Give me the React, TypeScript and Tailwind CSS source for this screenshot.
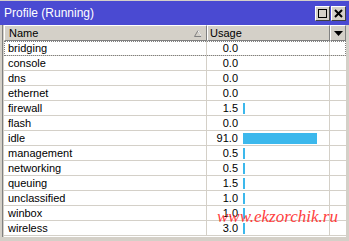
const rows: [string, number][] = [
  ["bridging", 0],
  ["console", 0],
  ["dns", 0],
  ["ethernet", 0],
  ["firewall", 1.5],
  ["flash", 0],
  ["idle", 91],
  ["management", 0.5],
  ["networking", 0.5],
  ["queuing", 1.5],
  ["unclassified", 1.0],
  ["winbox", 1.0],
  ["wireless", 3.0],
];

const App = () => {
  return (
    <div
      className="w-[349px] h-[241px] bg-[#d4d0c8] overflow-hidden relative text-[11px] text-black"
      style={{ fontFamily: '"Liberation Sans", Arial, sans-serif' }}
    >
      <div className="mt-px h-[24px] bg-[#4a4ad2] flex items-center pl-[4px] pr-[3px]">
        <span className="text-white text-[12px] flex-1">Profile (Running)</span>
        <div className="flex gap-[1px]">
          <div className="w-[15px] h-[15px] bg-[#d4d0c8] border border-t-white border-l-white border-r-[#404040] border-b-[#404040] flex items-center justify-center">
            <div className="w-[9px] h-[9px] border border-black" />
          </div>
          <div className="w-[15px] h-[15px] bg-[#d4d0c8] border border-t-white border-l-white border-r-[#404040] border-b-[#404040] flex items-center justify-center">
            <svg width="9" height="9" viewBox="0 0 9 9">
              <path d="M1 1 L8 8 M8 1 L1 8" stroke="black" strokeWidth="2" />
            </svg>
          </div>
        </div>
      </div>
      <div className="ml-[2px] mr-[3px] border-l border-[#808080] pl-px h-[212px] flex flex-col">
        <div className="flex h-[16px] bg-[#d4d0c8]">
          <div className="w-[203px] border-l border-t border-white border-r border-r-[#808080] border-b border-b-[#808080] flex items-center pl-[4px] pr-[4px]">
            <span className="flex-1">Name</span>
            <svg width="8" height="7" viewBox="0 0 8 7">
              <path d="M4 0.5 L7.5 6.5 L0.5 6.5 Z" fill="none" stroke="#808080" strokeWidth="1" />
              <path d="M4 0.5 L7.5 6.5" stroke="white" strokeWidth="1" />
            </svg>
          </div>
          <div className="w-[123px] border-l border-t border-white border-r border-r-[#808080] border-b border-b-[#808080] flex items-center pl-[2px]">
            Usage
          </div>
          <div className="flex-1 border-l border-t border-white border-r border-r-[#808080] border-b border-b-[#808080] flex items-center justify-center">
            <svg width="9" height="5" viewBox="0 0 9 5">
              <path d="M0 0 L9 0 L4.5 5 Z" fill="black" />
            </svg>
          </div>
        </div>
        <div className="flex-1 bg-white flex flex-col">
          {rows.map(([name, usage], i) => (
            <div
              key={name}
              className={`flex h-[15px] border-b border-[#d4d0c8] ${i === 0 ? "outline outline-1 outline-dotted outline-[#808080] -outline-offset-1" : ""}`}
            >
              <div className="w-[203px] border-r border-[#d4d0c8] pl-[4px] leading-[14px]">{name}</div>
              <div className="w-[123px] border-r border-[#d4d0c8] flex items-center">
                <div className="w-[31px] text-right leading-[14px]">{usage.toFixed(1)}</div>
                {usage > 0 && (
                  <div
                    className="ml-[5px] h-[11px] bg-[#3cb8ec]"
                    style={{ width: Math.max(2, Math.round(usage * 0.815)) }}
                  />
                )}
              </div>
              <div className="flex-1" />
            </div>
          ))}
        </div>
      </div>
      <div
        className="absolute left-[217px] top-[204px] text-[17px] italic text-[#ff2a2a] opacity-90"
        style={{ fontFamily: '"Liberation Serif", "Times New Roman", serif' }}
      >
        www.ekzorchik.ru
      </div>
    </div>
  );
};

export default App;
